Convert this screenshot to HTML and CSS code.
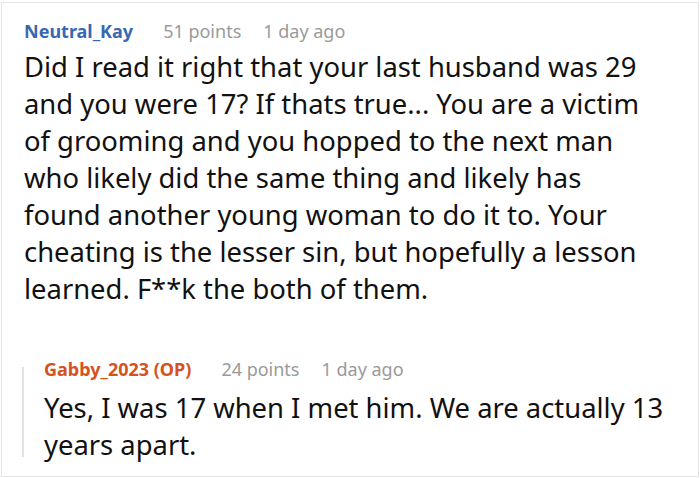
FILE: index.html
```html
<!DOCTYPE html>
<html>
<head>
<meta charset="utf-8">
<link rel="stylesheet" href="styles.css">
</head>
<body>
<div class="box">
  <div class="comment">
    <div class="meta">
      <span class="user">Neutral_Kay</span>
      <span class="info">51 points</span>
      <span class="info">1 day ago</span>
    </div>
    <p class="text">Did I read it right that your last husband was 29 and you were 17? If thats true... You are a victim of grooming and you hopped to the next man who likely did the same thing and likely has found another young woman to do it to. Your cheating is the lesser sin, but hopefully a lesson learned. F**k the both of them.</p>
  </div>
  <div class="reply">
    <div class="meta">
      <span class="user op">Gabby_2023 (OP)</span>
      <span class="info">24 points</span>
      <span class="info">1 day ago</span>
    </div>
    <p class="text big">Yes, I was 17 when I met him. We are actually 13 years apart.</p>
  </div>
</div>
</body>
</html>
```
FILE: styles.css
```css
html, body { margin: 0; padding: 0; background: #fff; }
body { font-family: "Noto Sans", "Open Sans", sans-serif; }
.box {
  margin: 2px 1px 1px 1px;
  border: 1px solid #e6e6e6;
  height: 475px;
  box-sizing: border-box;
  overflow: hidden;
}
.comment { padding: 16px 0 0 22px; }
.comment .text { max-width: 637px; }
.meta { display: flex; align-items: baseline; height: 24px; line-height: 24px; }
.user { font-weight: 700; font-size: 18px; color: #3768b5; margin-right: 30px; }
.user.op { color: #d5521f; }
.info { font-size: 18px; color: #9a9a9a; margin-right: 22px; }
.text {
  margin: 5px 0 0;
  font-size: 27.4px;
  line-height: 37px;
  color: #111;
}
.text.big { margin-top: 8px; }
.reply {
  position: relative;
  margin: 50px 0 0 20px;
  padding-left: 22px;
}
.reply::before {
  content: "";
  position: absolute;
  left: 0;
  top: 10px;
  bottom: 6px;
  width: 2px;
  background: #e3e3e3;
}
```
